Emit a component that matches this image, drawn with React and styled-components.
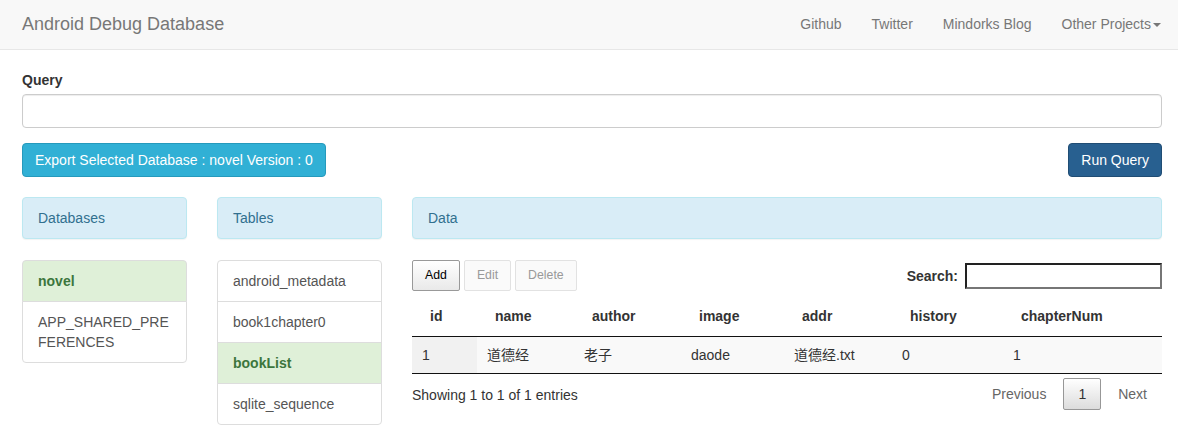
import React from 'react';
import styled, { createGlobalStyle, css } from 'styled-components';

const GlobalStyle = createGlobalStyle`
  * {
    box-sizing: border-box;
  }
  body {
    margin: 0;
    background: #fff;
    color: #333;
    font-family: "Liberation Sans", Arial, "Noto Sans CJK SC", sans-serif;
    font-size: 14px;
    line-height: 20px;
  }
`;

const Navbar = styled.nav`
  height: 50px;
  background: #f8f8f8;
  border-bottom: 1px solid #e7e7e7;
  display: flex;
  align-items: center;
  justify-content: space-between;
  padding: 0 2px 2px 22px;
  margin-bottom: 20px;
`;

const Brand = styled.a`
  font-size: 18px;
  color: #777;
  line-height: 20px;
  text-decoration: none;
`;

const NavList = styled.ul`
  display: flex;
  list-style: none;
  margin: 0;
  padding: 0;
`;

const NavLink = styled.a`
  display: block;
  padding: 15px;
  color: #777;
  text-decoration: none;
`;

const Caret = styled.span`
  display: inline-block;
  width: 0;
  height: 0;
  margin-left: 2px;
  vertical-align: middle;
  border-top: 4px solid #777;
  border-left: 4px solid transparent;
  border-right: 4px solid transparent;
`;

const Container = styled.div`
  padding: 0 16px 0 22px;
`;

const Label = styled.label`
  display: block;
  font-weight: bold;
  margin-bottom: 4px;
`;

const QueryInput = styled.input`
  display: block;
  width: 100%;
  height: 34px;
  border: 1px solid #ccc;
  border-radius: 4px;
  box-shadow: inset 0 1px 1px rgba(0, 0, 0, 0.075);
  padding: 6px 12px;
  font: inherit;
`;

const ActionRow = styled.div`
  display: flex;
  justify-content: space-between;
  margin: 15px 0 20px;
`;

const Button = styled.button`
  height: 34px;
  padding: 6px 12px;
  border-radius: 4px;
  font: inherit;
  color: #fff;
  border: 1px solid ${(p) => (p.$variant === 'info' ? '#269abc' : '#204d74')};
  background: ${(p) => (p.$variant === 'info' ? '#31b0d5' : '#286090')};
`;

const Columns = styled.div`
  display: grid;
  grid-template-columns: 165px 165px 1fr;
  gap: 30px;
  align-items: start;
`;

const Panel = styled.div`
  background: #d9edf7;
  border: 1px solid #bce8f1;
  border-radius: 4px;
  box-shadow: 0 1px 1px rgba(0, 0, 0, 0.05);
  padding: 10px 15px;
  color: #31708f;
  margin-bottom: 21px;
`;

const ListGroup = styled.ul`
  list-style: none;
  margin: 0;
  padding: 0;
`;

const ListItem = styled.li`
  padding: 10px 15px;
  border: 1px solid #ddd;
  margin-bottom: -1px;
  background: #fff;
  color: #555;
  word-break: break-all;
  &:first-child {
    border-radius: 4px 4px 0 0;
  }
  &:last-child {
    border-radius: 0 0 4px 4px;
    margin-bottom: 0;
  }
  ${(p) =>
    p.$active &&
    css`
      background: #dff0d8;
      color: #3c763d;
      font-weight: bold;
    `}
`;

const TableTop = styled.div`
  display: flex;
  justify-content: space-between;
  align-items: center;
`;

const ToolButtons = styled.div`
  display: flex;
  gap: 4px;
`;

const ToolButton = styled.button`
  height: 31px;
  padding: 6px 12px;
  font-family: inherit;
  font-size: 12.3px;
  line-height: 17px;
  border-radius: 2px;
  border: 1px solid ${(p) => (p.disabled ? '#e2e2e2' : '#999')};
  color: ${(p) => (p.disabled ? '#999' : '#000')};
  background: ${(p) =>
    p.disabled
      ? '#fafafa'
      : 'linear-gradient(to bottom, #fff 0%, #e9e9e9 100%)'};
`;

const SearchLabel = styled.label`
  display: flex;
  align-items: center;
  font-weight: bold;
  gap: 7px;
`;

const SearchInput = styled.input`
  width: 197px;
  height: 26px;
  border: 2px solid;
  border-color: #222 #767676 #767676 #222;
  font: inherit;
  padding: 1px 4px;
`;

const Table = styled.table`
  width: 100%;
  margin-top: 5px;
  border-collapse: collapse;
  table-layout: fixed;
  border-bottom: 1px solid #111;
`;

const Th = styled.th`
  text-align: left;
  padding: 10px 18px;
  font-weight: bold;
  border-bottom: 1px solid #111;
`;

const Td = styled.td`
  padding: 8px 10px;
  background: ${(p) => (p.$sorted ? '#f1f1f1' : '#f9f9f9')};
`;

const TableFoot = styled.div`
  display: flex;
  justify-content: space-between;
`;

const Info = styled.div`
  padding-top: 11px;
`;

const Pagination = styled.div`
  display: flex;
  padding-top: 4px;
`;

const PageButton = styled.a`
  display: block;
  padding: 6px 14px;
  line-height: 18px;
  margin-left: 2px;
  border-radius: 2px;
  border: 1px solid ${(p) => (p.$current ? '#979797' : 'transparent')};
  color: ${(p) => (p.$current ? '#333' : '#666')};
  background: ${(p) =>
    p.$current ? 'linear-gradient(to bottom, #fff 0%, #dcdcdc 100%)' : 'none'};
`;

const columns = [
  ['id', 65],
  ['name', 97],
  ['author', 107],
  ['image', 103],
  ['addr', 108],
  ['history', 111],
  ['chapterNum', 159],
];

const rows = [['1', '道德经', '老子', 'daode', '道德经.txt', '0', '1']];

export default function App() {
  return (
    <>
      <GlobalStyle />
      <Navbar>
        <Brand>Android Debug Database</Brand>
        <NavList>
          <li><NavLink>Github</NavLink></li>
          <li><NavLink>Twitter</NavLink></li>
          <li><NavLink>Mindorks Blog</NavLink></li>
          <li>
            <NavLink>
              Other Projects
              <Caret />
            </NavLink>
          </li>
        </NavList>
      </Navbar>
      <Container>
        <Label>Query</Label>
        <QueryInput />
        <ActionRow>
          <Button $variant="info">Export Selected Database : novel Version : 0</Button>
          <Button>Run Query</Button>
        </ActionRow>
        <Columns>
          <div>
            <Panel>Databases</Panel>
            <ListGroup>
              <ListItem $active>novel</ListItem>
              <ListItem>APP_SHARED_PREFERENCES</ListItem>
            </ListGroup>
          </div>
          <div>
            <Panel>Tables</Panel>
            <ListGroup>
              <ListItem>android_metadata</ListItem>
              <ListItem>book1chapter0</ListItem>
              <ListItem $active>bookList</ListItem>
              <ListItem>sqlite_sequence</ListItem>
            </ListGroup>
          </div>
          <div>
            <Panel>Data</Panel>
            <TableTop>
              <ToolButtons>
                <ToolButton>Add</ToolButton>
                <ToolButton disabled>Edit</ToolButton>
                <ToolButton disabled>Delete</ToolButton>
              </ToolButtons>
              <SearchLabel>
                Search:
                <SearchInput />
              </SearchLabel>
            </TableTop>
            <Table>
              <colgroup>
                {columns.map(([name, w]) => (
                  <col key={name} style={{ width: w }} />
                ))}
              </colgroup>
              <thead>
                <tr>
                  {columns.map(([name]) => (
                    <Th key={name}>{name}</Th>
                  ))}
                </tr>
              </thead>
              <tbody>
                {rows.map((row, i) => (
                  <tr key={i}>
                    {row.map((cell, j) => (
                      <Td key={j} $sorted={j === 0}>{cell}</Td>
                    ))}
                  </tr>
                ))}
              </tbody>
            </Table>
            <TableFoot>
              <Info>Showing 1 to 1 of 1 entries</Info>
              <Pagination>
                <PageButton>Previous</PageButton>
                <PageButton $current>1</PageButton>
                <PageButton>Next</PageButton>
              </Pagination>
            </TableFoot>
          </div>
        </Columns>
      </Container>
    </>
  );
}
